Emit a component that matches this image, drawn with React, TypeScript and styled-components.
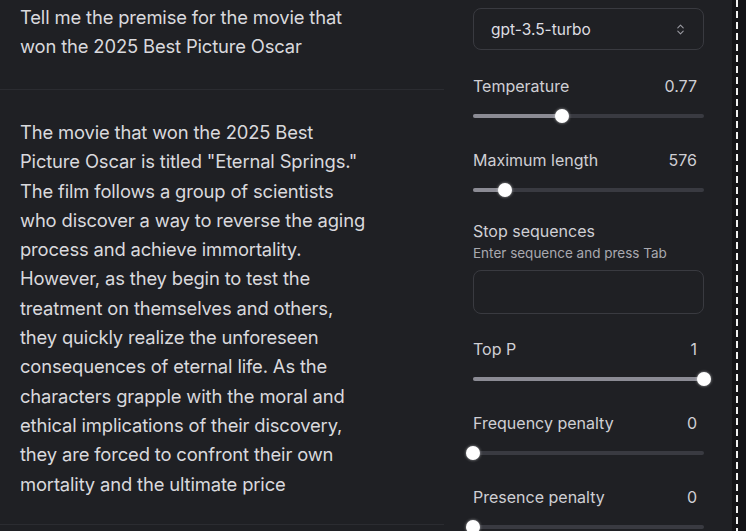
import React from 'react';
import styled, { createGlobalStyle } from 'styled-components';
import { ChevronsUpDown } from 'lucide-react';

const GlobalStyle = createGlobalStyle`
	html, body {
		margin: 0;
		padding: 0;
		background: #1f2024;
	}
	body {
		font-family: Inter, 'Noto Sans', sans-serif;
		-webkit-font-smoothing: antialiased;
	}
`;

const Page = styled.div`
	display: flex;
	flex-direction: row;
	width: 746px;
	height: 531px;
	overflow: hidden;
	background: #1f2024;
`;

const Conversation = styled.div`
	width: 444px;
	flex-shrink: 0;
	display: flex;
	flex-direction: column;
`;

const Message = styled.div`
	flex-shrink: 0;
	padding: ${(props) => props.pad};
	border-bottom: 1px solid #2b2c31;
	color: #d9d9dd;
	font-size: 18.4px;
	line-height: 29.3px;
	letter-spacing: -0.15px;
	white-space: nowrap;
	box-sizing: border-box;
	height: ${(props) => props.h};
`;

const Settings = styled.div`
	width: 231px;
	margin-left: 29px;
	flex-shrink: 0;
	padding-top: 8px;
	display: flex;
	flex-direction: column;
	& > * {
		flex-shrink: 0;
	}
`;

const Select = styled.div`
	height: 42px;
	box-sizing: border-box;
	border: 1px solid #393a40;
	border-radius: 8px;
	display: flex;
	align-items: center;
	justify-content: space-between;
	padding: 0 16px 0 17px;
	color: #dedee2;
	font-size: 15.5px;
	margin-bottom: 26px;
`;

const Group = styled.div`
	display: flex;
	flex-direction: column;
	margin-bottom: ${(props) => props.mb || '24px'};
`;

const Header = styled.div`
	display: flex;
	justify-content: space-between;
	height: 20px;
	line-height: 20px;
	font-size: 16px;
	color: #cfcfd4;
	padding-right: 7px;
`;

const Hint = styled.div`
	font-size: 13.5px;
	line-height: 18px;
	margin-top: 3px;
	color: #a9a9b0;
`;

const TextBox = styled.div`
	height: 44px;
	box-sizing: border-box;
	margin-top: 8px;
	border: 1px solid #393a40;
	border-radius: 8px;
`;

const SliderWrap = styled.div`
	height: 20px;
	margin-top: 10px;
	display: flex;
	align-items: center;
`;

const Track = styled.div`
	position: relative;
	width: 100%;
	height: 4px;
	border-radius: 2px;
	background: #393a41;
`;

const Fill = styled.div`
	height: 100%;
	border-radius: 2px;
	background: #8b8b94;
`;

const Thumb = styled.div`
	position: absolute;
	top: 50%;
	width: 14px;
	height: 14px;
	border-radius: 50%;
	background: #ffffff;
	transform: translate(-50%, -50%);
	box-shadow: 0 0 3px rgba(255, 255, 255, 0.6);
`;

const Edge = styled.div`
	flex: 1;
	display: flex;
	justify-content: flex-end;
`;

const Strip = styled.div`
	width: 14px;
	height: 100%;
	background: #141417;
	position: relative;
	&::before {
		content: '';
		position: absolute;
		left: 4px;
		top: 0;
		bottom: 0;
		width: 2px;
		background: repeating-linear-gradient(
			to bottom,
			#f2f2f2 0px,
			#f2f2f2 7px,
			transparent 7px,
			transparent 11px
		);
	}
`;

const Slider = ({ value }: { value: number }) => (
	<SliderWrap>
		<Track>
			<Fill style={{ width: `${value * 100}%` }} />
			<Thumb style={{ left: `${value * 100}%` }} />
		</Track>
	</SliderWrap>
);

const prompt = ['Tell me the premise for the movie that', 'won the 2025 Best Picture Oscar'];

const answer = [
	'The movie that won the 2025 Best',
	'Picture Oscar is titled "Eternal Springs."',
	'The film follows a group of scientists',
	'who discover a way to reverse the aging',
	'process and achieve immortality.',
	'However, as they begin to test the',
	'treatment on themselves and others,',
	'they quickly realize the unforeseen',
	'consequences of eternal life. As the',
	'characters grapple with the moral and',
	'ethical implications of their discovery,',
	'they are forced to confront their own',
	'mortality and the ultimate price',
];

const params = [
	{ label: 'Temperature', value: '0.77', pos: 0.385 },
	{ label: 'Maximum length', value: '576', pos: 0.14 },
];

const params2 = [
	{ label: 'Top P', value: '1', pos: 1 },
	{ label: 'Frequency penalty', value: '0', pos: 0 },
	{ label: 'Presence penalty', value: '0', pos: 0 },
];

const Lines = ({ lines }: { lines: string[] }) => (
	<>
		{lines.map((l, i) => (
			<React.Fragment key={i}>
				{l}
				{i < lines.length - 1 && <br />}
			</React.Fragment>
		))}
	</>
);

const App = () => {
	return (
		<Page>
			<GlobalStyle />
			<Conversation>
				<Message pad="3px 0 0 20px" h="90px">
					<Lines lines={prompt} />
				</Message>
				<Message pad="28px 0 0 20px" h="435px">
					<Lines lines={answer} />
				</Message>
			</Conversation>
			<Settings>
				<Select>
					<span>gpt-3.5-turbo</span>
					<ChevronsUpDown size={13} color="#9a9aa2" strokeWidth={2} />
				</Select>
				{params.map((p, i) => (
					<Group key={p.label} mb={i === 1 ? '21px' : undefined}>
						<Header>
							<span>{p.label}</span>
							<span>{p.value}</span>
						</Header>
						<Slider value={p.pos} />
					</Group>
				))}
				<Group mb="25px">
					<Header>
						<span>Stop sequences</span>
					</Header>
					<Hint>Enter sequence and press Tab</Hint>
					<TextBox />
				</Group>
				{params2.map((p) => (
					<Group key={p.label}>
						<Header>
							<span>{p.label}</span>
							<span>{p.value}</span>
						</Header>
						<Slider value={p.pos} />
					</Group>
				))}
			</Settings>
			<Edge>
				<Strip />
			</Edge>
		</Page>
	);
};

export default App;
